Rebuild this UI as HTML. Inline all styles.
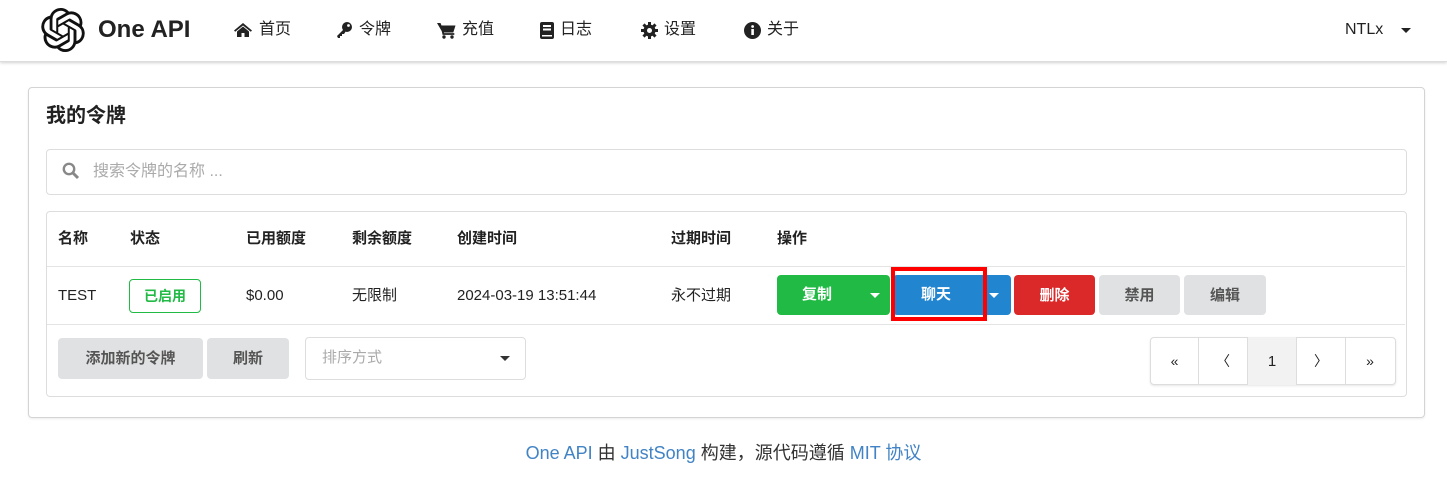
<!DOCTYPE html>
<html><head><meta charset="utf-8"><style>
*{box-sizing:border-box;margin:0;padding:0}
body{width:1447px;height:482px;background:#fff;font-family:"Liberation Sans","Noto Sans CJK SC",sans-serif;color:#222;position:relative;overflow:hidden;font-size:15px}
.a{position:absolute}
.nav{left:0;top:0;width:1447px;height:62px;background:#fff;box-shadow:0 1px 3px rgba(0,0,0,.18);border-bottom:1px solid #ddd}
.ni{top:15px;height:30px;font-size:16px;color:#222;display:flex;align-items:center;gap:6px;line-height:30px}
.btn{display:flex;align-items:center;justify-content:center;font-weight:bold;font-size:15px;border-radius:4px;color:#fff;line-height:1}
.g{background:#e0e1e2;color:#555}
.th{top:224px;height:30px;line-height:30px;font-weight:bold;font-size:15px}
.td{top:281px;height:30px;line-height:30px;font-size:15px}
.hl{height:1px;background:#e4e4e4;left:47px;width:1358px}
.pg{top:337px;height:48px;width:49px;display:flex;align-items:center;justify-content:center;border-left:1px solid #ddd;font-size:14px}
.car{width:0;height:0;border-left:5px solid transparent;border-right:5px solid transparent;border-top:5px solid #fff}
.bt{font-weight:bold;font-size:15px;color:#fff;line-height:30px;top:280px}
</style></head><body>
<div class="a nav"></div>
<svg class="a" style="left:41px;top:8px" width="44" height="44" viewBox="0 0 24 24"><path fill="#111" d="M22.28 9.820a5.98 5.98 0 0 0-.52-4.91 6.05 6.05 0 0 0-6.51-2.9A6.07 6.07 0 0 0 4.98 4.18a5.98 5.98 0 0 0-4 2.9 6.05 6.05 0 0 0 .74 7.1 5.98 5.98 0 0 0 .51 4.91 6.050 6.05 0 0 0 6.52 2.9A5.98 5.98 0 0 0 13.26 24a6.06 6.06 0 0 0 5.77-4.21 5.99 5.99 0 0 0 4-2.9 6.06 6.06 0 0 0-.75-7.07zm-9.020 12.61a4.48 4.48 0 0 1-2.88-1.04l.14-.08 4.78-2.76a.8.8 0 0 0 .39-.68v-6.74l2.02 1.17a.07.07 0 0 1 .04.05v5.58a4.5 4.5 0 0 1-4.49 4.5zm-9.66-4.13a4.47 4.47 0 0 1-.53-3.01l.14.09 4.78 2.760a.77.77 0 0 0 .78 0l5.84-3.37v2.33a.08.08 0 0 1-.03.06L9.740 19.95a4.5 4.5 0 0 1-6.14-1.65zM2.34 7.9a4.49 4.49 0 0 1 2.37-1.97V11.6a.77.77 0 0 0 .39.68l5.81 3.35-2.02 1.17a.08.08 0 0 1-.07 0l-4.83-2.79A4.5 4.5 0 0 1 2.34 7.87zm16.6 3.86L13.1 8.36 15.12 7.2a.08.08 0 0 1 .07 0l4.83 2.79a4.49 4.49 0 0 1-.68 8.1v-5.68a.79.79 0 0 0-.41-.66zm2.01-3.02l-.14-.09-4.77-2.78a.78.78 0 0 0-.79 0L9.41 9.23V6.9a.07.07 0 0 1 .03-.06l4.83-2.79a4.5 4.5 0 0 1 6.68 4.66zM8.31 12.86l-2.02-1.16a.08.08 0 0 1-.04-.06V6.07a4.5 4.5 0 0 1 7.38-3.45l-.14.08-4.78 2.76a.8.8 0 0 0-.39.68zm1.1-2.37l2.6-1.5 2.6 1.5v3l-2.6 1.5-2.6-1.5z"/></svg>
<div class="a" style="left:98px;top:16px;font-size:24px;font-weight:bold;color:#222">One API</div>
<div class="a ni" style="left:233px"><svg width="20" height="16" viewBox="0 0 20 16"><path d="M10 1L1 8.5l1.2 1.3L10 3.5l7.8 6.3L19 8.5z M4 9.5V15h4.5v-4h3v4H16V9.5L10 4.5z" fill="#222"/></svg>首页</div>
<div class="a ni" style="left:335px"><svg width="18" height="18" viewBox="0 0 18 18"><circle cx="12" cy="6" r="5" fill="#222"/><path d="M9 8L2 15l1 2h2v-2h2v-2h2l2-3z" fill="#222"/><circle cx="13.5" cy="4.5" r="1.4" fill="#fff"/></svg>令牌</div>
<div class="a ni" style="left:437px"><svg width="19" height="17" viewBox="0 0 19 17"><path d="M0 1h3.5l1 2.5h14l-2.2 7H5.5z" fill="#222"/><path d="M4.5 3.5l1.8 8.5h11" stroke="#222" stroke-width="1.8" fill="none"/><circle cx="7" cy="15" r="1.7" fill="#222"/><circle cx="15" cy="15" r="1.7" fill="#222"/></svg>充值</div>
<div class="a ni" style="left:540px"><svg width="14" height="17"><rect width="14" height="17" rx="2" fill="#222"/><rect x="3" y="3" width="8" height="2" fill="#fff"/><rect x="3" y="6.5" width="8" height="2" fill="#fff"/><rect x="2" y="13" width="10" height="1.5" fill="#fff"/></svg>日志</div>
<div class="a ni" style="left:641px"><svg width="17" height="17" viewBox="0 0 17 17"><g fill="#222"><circle cx="8.5" cy="8.5" r="6"/><rect x="7" y="0" width="3" height="17"/><rect x="0" y="7" width="17" height="3"/><rect x="7" y="0" width="3" height="17" transform="rotate(45 8.5 8.5)"/><rect x="7" y="0" width="3" height="17" transform="rotate(-45 8.5 8.5)"/></g><circle cx="8.5" cy="8.5" r="2.5" fill="#fff"/></svg>设置</div>
<div class="a ni" style="left:744px"><svg width="17" height="17"><circle cx="8.5" cy="8.5" r="8.5" fill="#222"/><rect x="7.3" y="7" width="2.6" height="6" fill="#fff"/><circle cx="8.6" cy="4.5" r="1.4" fill="#fff"/></svg>关于</div>
<div class="a ni" style="left:1345px">NTLx <span class="car" style="border-top-color:#222;margin-left:12px"></span></div>

<div class="a" style="left:28px;top:87px;width:1397px;height:331px;border:1px solid #d4d4d5;border-radius:4px;box-shadow:0 1px 2px rgba(0,0,0,.08)"></div>
<div class="a" style="left:46px;top:101px;font-size:20px;font-weight:bold;line-height:30px">我的令牌</div>
<div class="a" style="left:46px;top:149px;width:1361px;height:46px;border:1px solid #ddd;border-radius:4px"></div>
<svg class="a" style="left:62px;top:162px" width="18" height="18"><circle cx="7" cy="7" r="5.2" stroke="#888" stroke-width="2.4" fill="none"/><path d="M11 11l5 5" stroke="#888" stroke-width="3"/></svg>
<div class="a" style="left:93px;top:157px;font-size:16px;color:#aaa;line-height:30px">搜索令牌的名称 ...</div>

<div class="a" style="left:46px;top:211px;width:1361px;height:186px;border:1px solid #ddd;border-radius:4px"></div>
<div class="a hl" style="top:266px"></div>
<div class="a hl" style="top:324px"></div>
<div class="a th" style="left:58px">名称</div>
<div class="a th" style="left:130px">状态</div>
<div class="a th" style="left:246px">已用额度</div>
<div class="a th" style="left:352px">剩余额度</div>
<div class="a th" style="left:457px">创建时间</div>
<div class="a th" style="left:671px">过期时间</div>
<div class="a th" style="left:777px">操作</div>
<div class="a td" style="left:58px">TEST</div>
<div class="a" style="left:129px;top:279px;width:72px;height:34px;border:1px solid #21ba45;border-radius:4px;color:#21ba45;font-weight:bold;font-size:14px;display:flex;align-items:center;justify-content:center">已启用</div>
<div class="a td" style="left:246px">$0.00</div>
<div class="a td" style="left:352px">无限制</div>
<div class="a td" style="left:457px">2024-03-19 13:51:44</div>
<div class="a td" style="left:671px">永不过期</div>
<div class="a" style="left:777px;top:275px;width:113px;height:40px;background:#21ba45;border-radius:4px"></div>
<div class="a bt" style="left:802px">复制</div>
<div class="a car" style="left:870px;top:293px"></div>
<div class="a" style="left:893px;top:275px;width:118px;height:40px;background:#2185d0;border-radius:4px"></div>
<div class="a bt" style="left:921px">聊天</div>
<div class="a car" style="left:989px;top:293px"></div>
<div class="a" style="left:891px;top:267px;width:96px;height:54px;border:4px solid #f00"></div>
<div class="a btn" style="left:1014px;top:275px;width:81px;height:40px;background:#db2828">删除</div>
<div class="a btn g" style="left:1099px;top:275px;width:81px;height:40px">禁用</div>
<div class="a btn g" style="left:1184px;top:275px;width:82px;height:40px">编辑</div>

<div class="a btn g" style="left:58px;top:338px;width:145px;height:41px">添加新的令牌</div>
<div class="a btn g" style="left:207px;top:338px;width:82px;height:41px">刷新</div>
<div class="a" style="left:305px;top:337px;width:221px;height:43px;border:1px solid #ddd;border-radius:4px;background:#fff"></div>
<div class="a" style="left:322px;top:343px;color:#aaa;font-size:15px;line-height:30px">排序方式</div>
<div class="a car" style="left:500px;top:356px;border-top-color:#333"></div>

<div class="a" style="left:1150px;top:337px;width:246px;height:48px;border:1px solid #ddd;border-radius:4px;background:#fff;box-shadow:0 1px 2px rgba(0,0,0,.1)"></div>
<div class="a pg" style="left:1150px;border-left:none">«</div>
<div class="a pg" style="left:1198px">〈</div>
<div class="a pg" style="left:1247px;background:#f2f2f2;font-size:15px">1</div>
<div class="a pg" style="left:1296px">〉</div>
<div class="a pg" style="left:1345px">»</div>

<div class="a" style="left:0;width:1447px;top:438px;line-height:30px;text-align:center;font-size:18px;color:#333"><span style="color:#4183c4">One API</span> 由 <span style="color:#4183c4">JustSong</span> 构建，源代码遵循 <span style="color:#4183c4">MIT 协议</span></div>
</body></html>
